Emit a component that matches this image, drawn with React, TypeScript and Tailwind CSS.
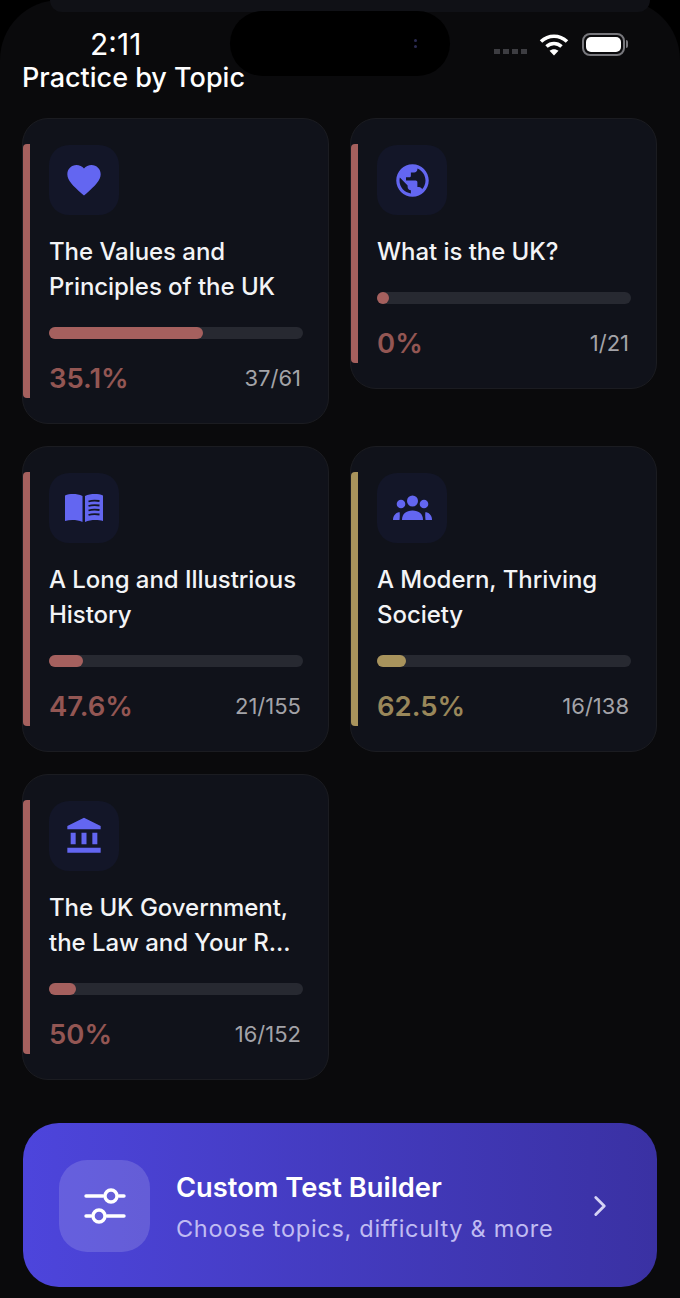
import React from 'react';
import { MdFavorite, MdPublic, MdAccountBalance } from 'react-icons/md';
import { ChevronRight } from 'lucide-react';

type Topic = {
    title: React.ReactNode;
    icon: React.ReactNode;
    percent: string;
    count: string;
    fill: number;
    gold?: boolean;
};

const BookIcon = () => (
    <svg width="38" height="30" viewBox="0 0 38 30" fill="currentColor">
        <path d="M0 2.5C5 .5 12 .5 17.5 3V29C12 26.5 5 26.5 0 28Z" />
        <path d="M20 3C25.500 .5 33 .5 38 2.500V28C33 26.500 25.500 26.500 20 29Z" />
        <path d="M23.500 8.500C26.500 7.500 30.500 7.500 34.500 8M23.500 13C26.500 12 30.500 12 34.500 12.500M23.500 17.500C26.500 16.500 30.500 16.500 34.500 17M23.500 22C26.500 21 30.500 21 34.500 21.500" fill="none" stroke="#131628" strokeWidth="1.800" />
    </svg>
);

const GroupIcon = () => (
    <svg width="39" height="26" viewBox="0 0 39 26" fill="currentColor">
        <circle cx="19.500" cy="6" r="5.500" />
        <circle cx="8" cy="9" r="4.300" />
        <circle cx="31" cy="9" r="4.300" />
        <path d="M9 25C9 19 13 15.500 19.500 15.500C26 15.500 30 19 30 25Z" />
        <path d="M0 25C0 21 2 18 6.500 17C7 18.500 6.800 22 6.500 25Z" />
        <path d="M39 25C39 21 37 18 32.500 17C32 18.500 32.200 22 32.500 25Z" />
    </svg>
);

const topics: Topic[] = [
    { title: <>The Values and<br />Principles of the UK</>, icon: <MdFavorite size={40} />, percent: '35.1%', count: '37/61', fill: 154 },
    { title: 'What is the UK?', icon: <MdPublic size={39} />, percent: '0%', count: '1/21', fill: 12 },
    { title: <>A Long and Illustrious<br />History</>, icon: <BookIcon />, percent: '47.6%', count: '21/155', fill: 34 },
    { title: <>A Modern, Thriving<br />Society</>, icon: <GroupIcon />, percent: '62.5%', count: '16/138', fill: 29, gold: true },
    { title: <>The UK Government,<br />the Law and Your R...</>, icon: <MdAccountBalance size={40} />, percent: '50%', count: '16/152', fill: 27 },
];

const TopicCard: React.FC<{ topic: Topic }> = ({ topic }) => (
    <div className="relative rounded-[26px] border border-[#1b1c21] bg-[#10121a] px-[26px] pt-[26px] pb-[25px]">
        <div className={`absolute left-0 top-[25px] bottom-[25px] w-[7px] rounded-l-[4px] ${topic.gold ? 'bg-[#a8935c]' : 'bg-[#a5605e]'}`}></div>
        <div className="flex h-[70px] w-[70px] items-center justify-center rounded-[20px] bg-[#131628] text-[#6366f1]">
            {topic.icon}
        </div>
        <div className="mt-[19px] text-[24px] font-medium leading-[35px] tracking-[-0.05px] text-[#f3f4f6]">{topic.title}</div>
        <div className="mt-[23px] h-[12px] w-[254px] rounded-full bg-[#272931]">
            <div className={`h-[12px] rounded-full ${topic.gold ? 'bg-[#a8935c]' : 'bg-[#a5605e]'}`} style={{ width: `${topic.fill}px` }}></div>
        </div>
        <div className="mt-[20px] flex h-[39px] items-center justify-between">
            <span className={`text-[27.5px] font-semibold ${topic.gold ? 'text-[#99875a]' : 'text-[#935653]'}`}>{topic.percent}</span>
            <span className="pr-[1px] text-[22px] text-[#a3a3a8]">{topic.count}</span>
        </div>
    </div>
);

const StatusBar = () => (
    <div className="flex h-[30px] items-center justify-between pl-[90px] pr-[52px] text-white">
        <span className="text-[30px] font-normal leading-[30px]">2:11</span>
        <div className="flex items-center">
            <div className="mt-[14px] flex gap-[3px]">
                <i className="h-[5px] w-[6px] bg-[#3d3d42]"></i>
                <i className="h-[5px] w-[6px] bg-[#3d3d42]"></i>
                <i className="h-[5px] w-[6px] bg-[#3d3d42]"></i>
                <i className="h-[5px] w-[6px] bg-[#3d3d42]"></i>
            </div>
            <svg className="ml-[12px]" width="30" height="24" viewBox="0 0 30 24" fill="none" stroke="white" strokeWidth="3.6" strokeLinecap="butt">
                <path d="M2 9.5C9.5 2.5 20.5 2.5 28 9.5" />
                <path d="M7.5 14.5C12 10.5 18 10.5 22.5 14.5" />
                <path d="M15 23.5 10.5 18.8C13 16.6 17 16.6 19.5 18.8Z" fill="white" stroke="none" />
            </svg>
            <div className="ml-[13px] flex items-center">
                <div className="h-[23px] w-[43px] rounded-[8px] border-2 border-[#77777c] p-[2px]">
                    <div className="h-full w-full rounded-[5px] bg-white"></div>
                </div>
                <div className="ml-[1px] h-[8px] w-[2px] rounded-r-full bg-[#77777c]"></div>
            </div>
        </div>
    </div>
);

export default function App() {
    return (
        <div className="h-[1298px] w-[680px] overflow-hidden bg-black font-['Inter',sans-serif]">
            <div className="relative h-full rounded-t-[60px] bg-[#0a0a0c]">
                <div className="ml-[50px] mr-[30px] h-[12px] rounded-b-[14px] bg-[#101116]"></div>

                <div className="absolute left-[230px] top-[11px] flex h-[65px] w-[220px] items-center justify-end rounded-full bg-black pr-[33px]">
                    <div className="flex flex-col gap-[3px]">
                        <i className="h-[3px] w-[3px] rounded-full bg-[#2b2b52]"></i>
                        <i className="h-[3px] w-[3px] rounded-full bg-[#2b2b52]"></i>
                    </div>
                </div>

                <div className="mt-[17px]">
                    <StatusBar />
                </div>
                <h1 className="relative mt-[1px] pl-[22px] text-[27px] font-medium leading-[35px] text-white">Practice by Topic</h1>

                <div className="mt-[23px] grid grid-cols-[307px_307px] items-start gap-x-[21px] gap-y-[22px] pl-[22px]">
                    {topics.map((t, i) => <TopicCard key={i} topic={t} />)}
                </div>

                <div className="mx-[23px] mt-[43px] flex h-[164px] items-center rounded-[36px] bg-gradient-to-r from-[#4d45dc] to-[#3a31a3] pl-[36px] pr-[40px] pt-[2px]">
                    <div className="flex h-[92px] w-[91px] items-center justify-center rounded-[28px] bg-white/15">
                        <svg width="44" height="44" viewBox="0 0 44 44" fill="none" stroke="white" strokeWidth="3.4" strokeLinecap="round">
                            <path d="M3 12H20" />
                            <circle cx="28" cy="12" r="6" />
                            <path d="M36 12H41" />
                            <path d="M3 32H8" />
                            <circle cx="16" cy="32" r="6" />
                            <path d="M24 32H41" />
                        </svg>
                    </div>
                    <div className="ml-[26px] flex-1 pt-[3px]">
                        <div className="text-[27.3px] font-semibold leading-[36px] text-white">Custom Test Builder</div>
                        <div className="mt-[7px] text-[23.5px] leading-[32px] tracking-[0.7px] text-[#c0bcf2]">Choose topics, difficulty &amp; more</div>
                    </div>
                    <ChevronRight size={34} className="text-[#d5d3f5]" />
                </div>
            </div>
        </div>
    );
}
